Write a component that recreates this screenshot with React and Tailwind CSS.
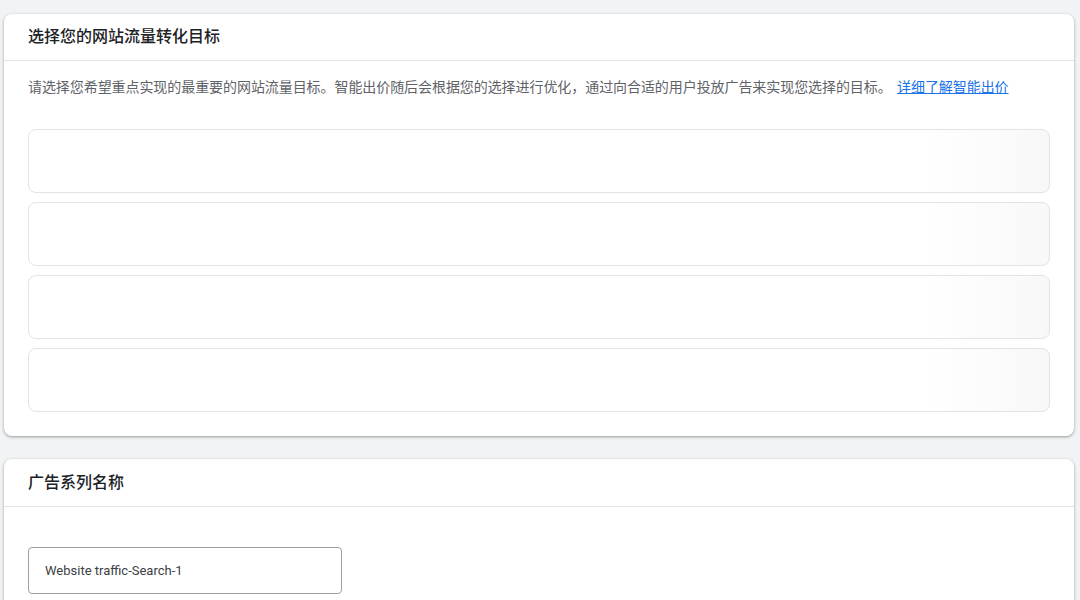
import React from "react";

const goals = [1, 2, 3, 4];

const App = () => {
  return (
    <div
      className="min-h-screen w-[1080px] h-[600px] overflow-hidden bg-[#f1f3f4] pt-[14px] pl-[4px] pr-[6px]"
      style={{ fontFamily: '"Roboto", "Noto Sans CJK SC", sans-serif' }}
    >
      {/* Conversion goal card */}
      <div className="bg-white rounded-[8px] shadow-[0_1px_2px_rgba(60,64,67,0.3),0_1px_3px_1px_rgba(60,64,67,0.15)]">
        <div className="h-[47px] flex items-center px-[24px] border-b border-[#e3e3e3]">
          <h2 className="text-[16px] font-medium text-[#202124]">选择您的网站流量转化目标</h2>
        </div>
        <div className="px-[24px] pt-[15px] pb-[24px]">
          <p className="text-[14px] leading-[22px] tracking-[-0.07px] text-[#5f6368]">
            请选择您希望重点实现的最重要的网站流量目标。智能出价随后会根据您的选择进行优化，通过向合适的用户投放广告来实现您选择的目标。{" "}
            <a href="#" className="ml-[2px] text-[#1a73e8] underline">
              详细了解智能出价
            </a>
          </p>
          <div className="mt-[31px] flex flex-col gap-[9px]">
            {goals.map((g) => (
              <div
                key={g}
                className="h-[64px] rounded-[8px] border border-[#e3e3e3] bg-gradient-to-r from-white from-88% to-[#f8f8f8]"
              />
            ))}
          </div>
        </div>
      </div>

      {/* Campaign name card */}
      <div className="mt-[23px] bg-white rounded-[8px] shadow-[0_1px_2px_rgba(60,64,67,0.3),0_1px_3px_1px_rgba(60,64,67,0.15)]">
        <div className="h-[48px] flex items-center px-[24px] border-b border-[#e3e3e3]">
          <h2 className="text-[16px] font-medium text-[#202124]">广告系列名称</h2>
        </div>
        <div className="px-[24px] pt-[40px] pb-[24px]">
          <div className="w-[314px] h-[47px] rounded-[4px] border border-[#9aa0a6] flex items-center px-[16px]">
            <span className="text-[13px] text-[#3c4043]">Website traffic-Search-1</span>
          </div>
        </div>
      </div>
    </div>
  );
};

export default App;
